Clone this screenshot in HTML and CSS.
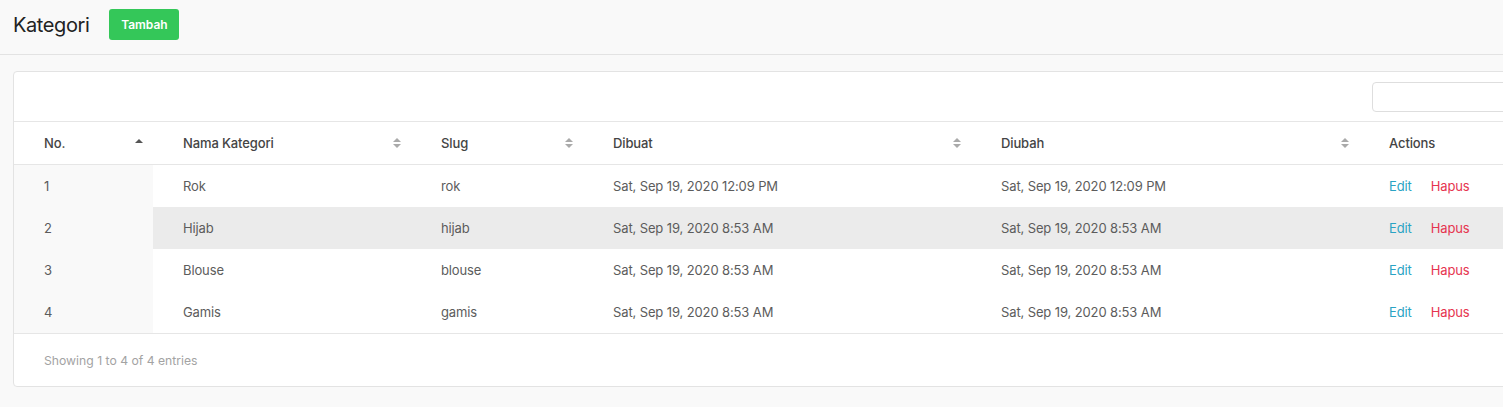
FILE: index.html
```html
<!DOCTYPE html>
<html lang="id">
<head>
<meta charset="utf-8">
<title>Kategori</title>
<link rel="stylesheet" href="styles.css">
</head>
<body>
<header class="page-header">
  <h1 class="page-title">Kategori</h1>
  <button class="btn-add">Tambah</button>
</header>
<main class="content">
  <section class="card">
    <div class="card-top">
      <input class="search" type="text" aria-label="Search">
    </div>
    <table class="data-table">
      <colgroup>
        <col style="width:139px"><col style="width:258px"><col style="width:172px"><col style="width:388px"><col style="width:388px"><col style="width:200px">
      </colgroup>
      <thead>
        <tr>
          <th><span>No.</span><span class="sort asc"></span></th>
          <th><span>Nama Kategori</span><span class="sort both"></span></th>
          <th><span>Slug</span><span class="sort both"></span></th>
          <th><span>Dibuat</span><span class="sort both"></span></th>
          <th><span>Diubah</span><span class="sort both"></span></th>
          <th><span>Actions</span></th>
        </tr>
      </thead>
      <tbody>
        <tr>
          <td class="sorted">1</td><td>Rok</td><td>rok</td><td>Sat, Sep 19, 2020 12:09 PM</td><td>Sat, Sep 19, 2020 12:09 PM</td>
          <td><a class="act edit">Edit</a><a class="act del">Hapus</a></td>
        </tr>
        <tr class="hover">
          <td class="sorted">2</td><td>Hijab</td><td>hijab</td><td>Sat, Sep 19, 2020 8:53 AM</td><td>Sat, Sep 19, 2020 8:53 AM</td>
          <td><a class="act edit">Edit</a><a class="act del">Hapus</a></td>
        </tr>
        <tr>
          <td class="sorted">3</td><td>Blouse</td><td>blouse</td><td>Sat, Sep 19, 2020 8:53 AM</td><td>Sat, Sep 19, 2020 8:53 AM</td>
          <td><a class="act edit">Edit</a><a class="act del">Hapus</a></td>
        </tr>
        <tr>
          <td class="sorted">4</td><td>Gamis</td><td>gamis</td><td>Sat, Sep 19, 2020 8:53 AM</td><td>Sat, Sep 19, 2020 8:53 AM</td>
          <td><a class="act edit">Edit</a><a class="act del">Hapus</a></td>
        </tr>
      </tbody>
    </table>
    <div class="card-foot">Showing 1 to 4 of 4 entries</div>
  </section>
</main>
</body>
</html>
```

FILE: styles.css
```css
html, body {
  margin: 0;
  padding: 0;
  background: #f9f9f9;
  overflow: hidden;
  font-family: Inter, "Noto Sans", sans-serif;
  color: #5c5c5c;
}

.page-header {
  display: flex;
  align-items: center;
  gap: 20px;
  height: 49px;
  padding: 0 0 5px 13px;
  border-bottom: 1px solid #e3e3e3;
  box-sizing: content-box;
}

.page-title {
  margin: 0;
  font-size: 20px;
  font-weight: 400;
  color: #222;
  letter-spacing: -0.4px;
}

.btn-add {
  width: 70px;
  height: 31px;
  border: none;
  border-radius: 3px;
  background: #34c759;
  color: #fff;
  font-family: Inter, "Noto Sans", sans-serif;
  font-size: 12px;
  font-weight: 600;
  padding: 0;
}

.content {
  padding: 16px 0 0 13px;
}

.card {
  width: 1560px;
  background: #fff;
  border: 1px solid #e3e3e3;
  border-radius: 4px;
}

.card-top {
  height: 49px;
  display: flex;
  align-items: center;
  padding-left: 1358px;
  border-bottom: 1px solid #e6e6e6;
}

.search {
  width: 180px;
  height: 30px;
  box-sizing: border-box;
  border: 1px solid #dedede;
  border-radius: 4px;
  background: #fff;
}

.data-table {
  border-collapse: collapse;
  table-layout: fixed;
  width: 1545px;
  font-size: 13px;
  letter-spacing: -0.12px;
}

.data-table th {
  height: 42px;
  padding: 0 0 0 30px;
  text-align: left;
  font-weight: 500;
  color: #444;
  position: relative;
  border-bottom: 1px solid #e6e6e6;
}

.data-table td {
  height: 42px;
  padding: 0 0 0 30px;
  color: #5c5c5c;
  white-space: nowrap;
}

.data-table td.sorted {
  background: #f9f9f9;
}

.data-table tr.hover td {
  background: #ebebeb;
}

.data-table tr.hover td.sorted {
  background: #f9f9f9;
}

.sort {
  position: absolute;
  right: 10px;
  top: 50%;
  width: 8px;
  height: 10px;
  margin-top: -5px;
}

.sort.asc::before {
  content: "";
  position: absolute;
  left: 0;
  top: 1px;
  border-left: 4px solid transparent;
  border-right: 4px solid transparent;
  border-bottom: 4px solid #555;
}

.sort.both::before,
.sort.both::after {
  content: "";
  position: absolute;
  left: 0;
  border-left: 4px solid transparent;
  border-right: 4px solid transparent;
}

.sort.both::before {
  top: 0;
  border-bottom: 4px solid #aaa;
}

.sort.both::after {
  bottom: 0;
  border-top: 4px solid #aaa;
}

.act {
  cursor: pointer;
}

.act.edit {
  color: #2aa3c4;
  margin-right: 19px;
}

.act.del {
  color: #e6344f;
}

.card-foot {
  border-top: 1px solid #e6e6e6;
  height: 52px;
  padding-left: 30px;
  display: flex;
  align-items: center;
  font-size: 12.2px;
  color: #a3a3a3;
}
```
